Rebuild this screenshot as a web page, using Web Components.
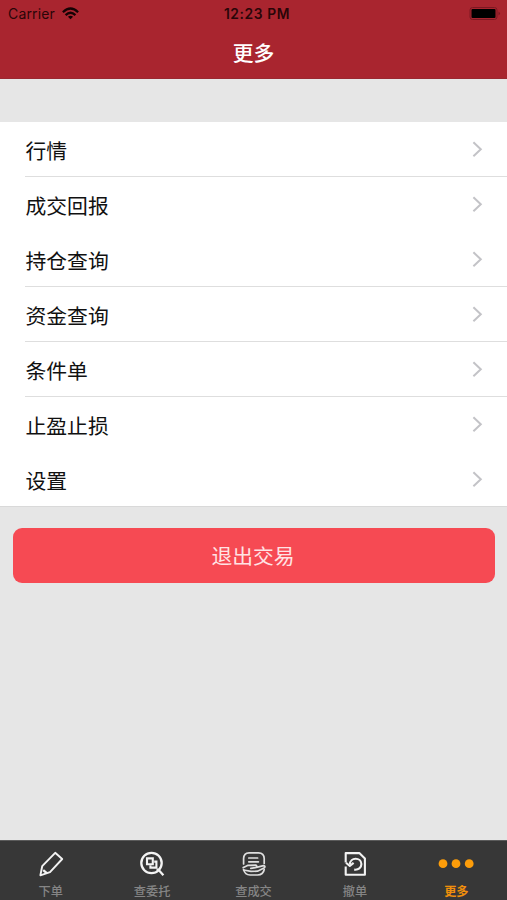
<!DOCTYPE html>
<html lang="zh-CN">
<head>
<meta charset="utf-8">
<title>更多</title>
<style>
body { margin: 0; }
</style>
</head>
<body>
<more-page></more-page>
<script>
const define = (name, html) => {
  const t = document.createElement('template');
  t.innerHTML = html;
  customElements.define(name, class extends HTMLElement {
    constructor() {
      super();
      this.attachShadow({ mode: 'open' }).appendChild(t.content.cloneNode(true));
    }
  });
};

define('status-bar', `
<style>
:host { display: grid; grid-template-columns: 1fr auto 1fr; align-items: center; height: 27px; padding: 0 6px 0 8px; box-sizing: border-box; color: #2a0508; font: 14px/27px Inter, sans-serif; }
.left { display: flex; align-items: center; gap: 7px; letter-spacing: .15px; }
.time { font-weight: 600; font-size: 13.8px; letter-spacing: .6px; padding: 1px 0 0 5px; line-height: 26px; }
.right { display: flex; justify-content: flex-end; }
svg { display: block; }
</style>
<div class="left"><span>Carrier</span>
<svg width="17" height="13" viewBox="0 0 17 13" fill="none" stroke="#150204" stroke-width="2.3"><path d="M.9 5.2Q8.5-2.2 16.1 5.2M3.6 8.1Q8.5 3.4 13.4 8.1"/><path d="M8.5 12.3 5.9 9.7Q8.5 7.6 11.1 9.7Z" fill="#150204" stroke="none"/></svg></div>
<div class="time">12:23 PM</div>
<div class="right"><svg width="32" height="13" viewBox="0 0 32 13"><rect x="1" y=".5" width="27" height="12" rx="2.5" fill="none" stroke="#7c1822"/><rect x="2.5" y="2" width="24" height="9" rx="1" fill="#000"/><path d="M29.5 4.5Q32.5 6.5 29.5 8.5Z" fill="#7c1822"/></svg></div>
`);

define('nav-header', `
<style>
:host { display: block; height: 79px; box-sizing: border-box; background: #a9252f; border-bottom: 1px solid #9a2831; }
h1 { margin: 0; height: 51px; text-align: center; color: #fff; font: 500 20.8px/50px "Noto Sans CJK SC", sans-serif; }
</style>
<status-bar></status-bar><h1><slot></slot></h1>
`);

define('menu-row', `
<style>
:host { display: flex; align-items: center; justify-content: space-between; flex: none; height: 55px; box-sizing: border-box; margin-left: 25px; padding: 0 24px 0 .5px; border-bottom: 1px solid transparent; color: #111; font: 20.8px/30px "Noto Sans CJK SC", sans-serif; }
:host([divider]) { border-bottom-color: #dedede; }
span { padding-top: 2px; }
svg { display: block; }
</style>
<span><slot></slot></span>
<svg width="11" height="18" viewBox="0 0 11 18" fill="none" stroke="#c3c3c7" stroke-width="2"><path d="M1.4 2.3 8.8 9.3 1.4 16.3"/></svg>
`);

define('menu-list', `
<style>
:host { display: flex; flex-direction: column; height: 385px; box-sizing: border-box; background: #fff; border-bottom: 1px solid #d9d9d9; }
</style><slot></slot>
`);

define('exit-button', `
<style>
:host { display: block; margin: 21px 12px 0 13px; }
button { display: block; width: 100%; height: 55px; padding: 0 2px 1px 0; border: 0; border-radius: 9px; background: #f64a53; color: #ffe3e4; font: 20.8px/54px "Noto Sans CJK SC", sans-serif; }
</style>
<button><slot></slot></button>
`);

define('tab-item', `
<style>
:host { display: flex; flex-direction: column; align-items: center; flex: 1; padding-top: 9px; color: #858585; font: 500 12.2px/16px "Noto Sans CJK SC", sans-serif; }
:host([active]) { color: #f08f0c; font-weight: 700; }
.icon { height: 28px; margin-bottom: 5px; }
</style>
<div class="icon"><slot name="icon"></slot></div><span><slot></slot></span>
`);

define('tab-bar', `
<style>
:host { display: flex; height: 60px; background: #373737; box-sizing: border-box; border-top: 1px solid #5b5b5b; }
svg { display: block; }
</style>
<tab-item><svg slot="icon" width="28" height="28" viewBox="0 0 28 28" fill="none" stroke="#f3f3f3" stroke-width="1.9" stroke-linejoin="round"><path d="M18.2 2.8 25.2 9 13 22.2 3.4 25.3 5.2 16.2Z"/><path d="M6.2 20.2 9.8 23.2" stroke-width="2.4"/></svg>下单</tab-item>
<tab-item><svg slot="icon" width="28" height="28" viewBox="0 0 28 28" fill="none" stroke="#f3f3f3" stroke-width="2.3"><circle cx="13.5" cy="13" r="10.2"/><path d="M18.5 19.6H20.3L25.4 25.3"/><path stroke-width="2.1" d="M9 8.4H14.8V14.2H9ZM16.2 11.6H18.4V17.6H12.4V15.4"/></svg>查委托</tab-item>
<tab-item><svg slot="icon" width="28" height="28" viewBox="0 0 28 28" fill="none" stroke="#dedede" stroke-width="1.7" stroke-linejoin="round" stroke-linecap="round"><path d="M3.6 14V8.5Q3.8 3 9 2.8H18.5Q24 3 24.2 8.5V13.5M3.6 19.6Q5 24.8 10 25H17.5Q23.3 24.8 24.2 19.5"/><path d="M8.8 8H17.6M8.8 11.8H18.4"/><path d="M3.2 17.6Q5.5 16.8 8 15.3L16 15.2Q17.8 16.6 15.3 17.6L10.8 18.4M16.5 17.4 23.5 15.6Q26 16.2 24 18L17.5 21.2 11 21.4 3.6 20"/></svg>查成交</tab-item>
<tab-item><svg slot="icon" width="28" height="28" viewBox="0 0 28 28" fill="none" stroke="#f3f3f3" stroke-width="2.1" stroke-linejoin="round"><path d="M4.7 12.6V3.1H18.3L23.9 8.5V24.7H4.7V16.4"/><path d="M8.8 14.6C9 6.8 20.2 6.9 20.4 14 20.4 17.8 17.4 20.2 13.2 19.6"/><path d="M5 12.8 8.8 16 12.6 12.9"/></svg>撤单</tab-item>
<tab-item active><svg slot="icon" width="38" height="28" viewBox="0 0 38 28" fill="#fd9d0a"><circle cx="6" cy="13.7" r="4.4"/><circle cx="19" cy="13.7" r="4.4"/><circle cx="32.2" cy="13.7" r="4.4"/></svg>更多</tab-item>
`);

define('more-page', `
<style>
:host { display: flex; flex-direction: column; height: 900px; background: #e6e6e6; overflow: hidden; }
menu-list { margin-top: 43px; }
tab-bar { margin-top: auto; }
</style>
<nav-header>更多</nav-header>
<menu-list>
<menu-row divider>行情</menu-row>
<menu-row>成交回报</menu-row>
<menu-row divider>持仓查询</menu-row>
<menu-row divider>资金查询</menu-row>
<menu-row divider>条件单</menu-row>
<menu-row>止盈止损</menu-row>
<menu-row>设置</menu-row>
</menu-list>
<exit-button>退出交易</exit-button>
<tab-bar></tab-bar>
`);
</script>
</body>
</html>
